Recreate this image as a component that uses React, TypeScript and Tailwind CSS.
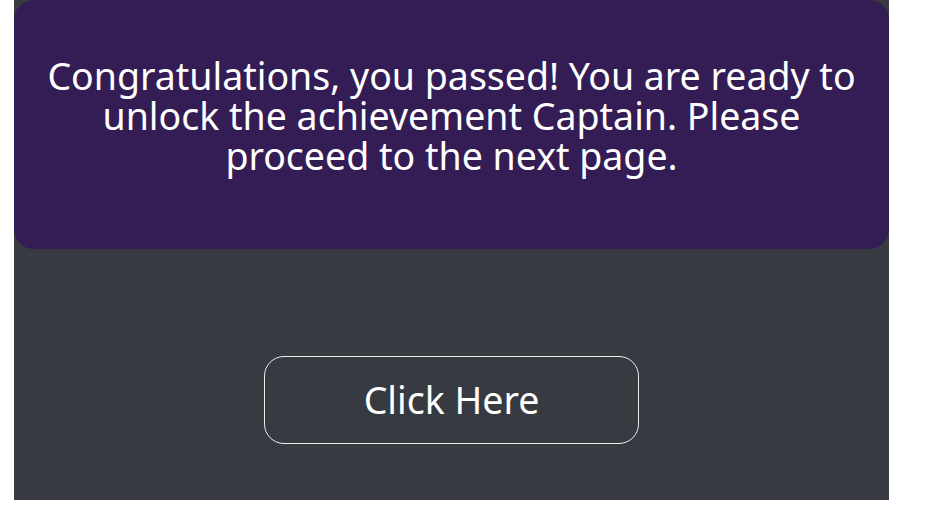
export default function App() {
  return (
    <div className="w-[930px] h-[506px] bg-white" style={{ fontFamily: '"Noto Sans", sans-serif' }}>
      <div className="ml-[14px] w-[875px] h-[500px] bg-[#373a40] flex flex-col">
        <div className="h-[249px] bg-[#341d54] rounded-[20px] flex justify-center pt-[56px] px-6">
          <p className="text-white text-[37.5px] leading-[40px] text-center">
            Congratulations, you passed! You are ready to unlock the achievement Captain. Please
            proceed to the next page.
          </p>
        </div>
        <div className="flex justify-center pt-[107px]">
          <button className="w-[375px] h-[88px] border border-white/90 rounded-[20px] text-white text-[37.5px]">
            Click Here
          </button>
        </div>
      </div>
    </div>
  );
}
